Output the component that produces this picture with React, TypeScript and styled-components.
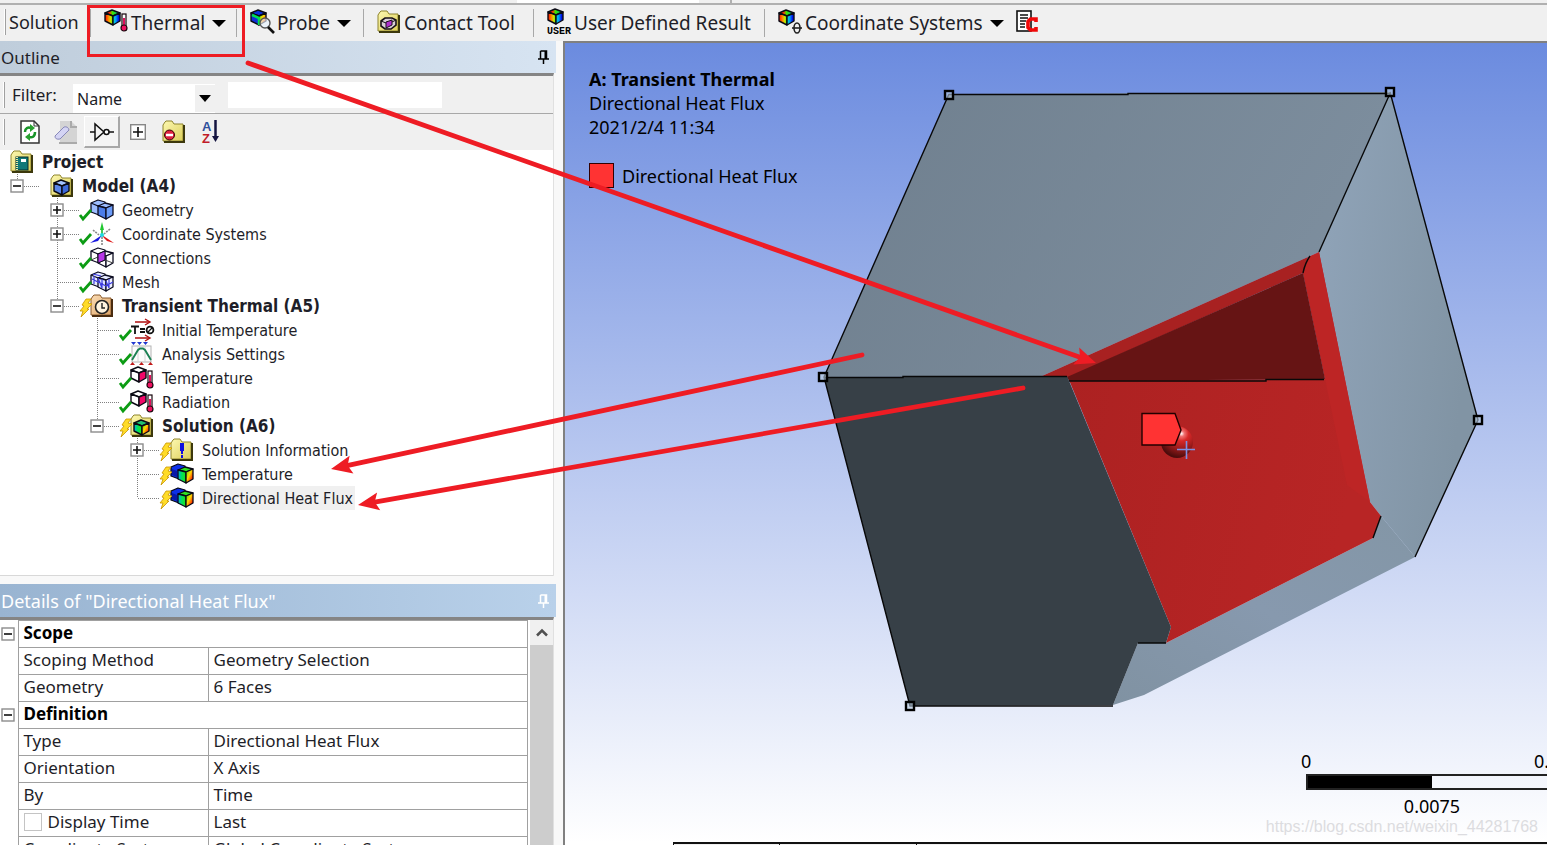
import React from 'react';
import styled, { createGlobalStyle, css } from 'styled-components';

const UI = '"Noto Sans", "Open Sans", sans-serif';
const TREE = '"DejaVu Sans Condensed", "DejaVu Sans", sans-serif';

const GlobalStyle = createGlobalStyle`
  * { box-sizing: border-box; }
  body { margin: 0; background: #f0f0f0; font-family: ${UI}; color: #1e1e28; overflow: hidden; }
  button, input, select { font: inherit; color: inherit; margin: 0; }
  svg { display: block; flex: none; }
`;

/* ---------- page frame ---------- */

const Page = styled.div`
  position: relative;
  display: flex;
  flex-direction: column;
  height: 100vh;
`;

const UpperStrip = styled.div`
  display: flex;
  flex: none;
  height: 5px;
  border-bottom: 2px solid #b0b0b0;
`;

const UpperSegment = styled.div<{ $w?: number; $field?: boolean; $edge?: boolean }>`
  flex: ${p => (p.$w ? `0 0 ${p.$w}px` : '1')};
  background: ${p => (p.$field ? '#fff' : '#f0f0f0')};
  border-right: ${p => (p.$edge ? '2px solid #b0b0b0' : '0')};
`;

const Toolbar = styled.header`
  display: flex;
  flex: none;
  height: 36px;
  padding-left: 1px;
  background: #f0f0f0;
`;

const ToolbarTitle = styled.div`
  width: 90px;
  padding-left: 3px;
  margin: 4px 0;
  border-right: 1px solid #a8a8a8;
  font-size: 18px;
  line-height: 27px;
  display: flex;
  gap: 3px;
`;

const ToolButton = styled.button<{ $w: number; $last?: boolean }>`
  display: flex;
  align-items: center;
  flex: 0 0 ${p => p.$w}px;
  gap: 3px;
  margin: 4px 0;
  padding: 0 0 0 13px;
  border: 0;
  border-right: ${p => (p.$last ? '0' : '1px solid #a8a8a8')};
  background: none;
  font-size: 19px;
  line-height: 28px;
  white-space: nowrap;
`;

const Caret = styled.svg`
  margin-left: 4px;
`;

const Body = styled.div`
  display: flex;
  flex: 1;
  min-height: 0;
`;

const Side = styled.aside`
  display: flex;
  flex-direction: column;
  flex: 0 0 563px;
  padding-right: 7px;
  background: #f8f8f8;
`;

const Outline = styled.section`
  display: flex;
  flex: 1;
  flex-direction: column;
  min-height: 0;
  margin-bottom: 8px;
`;

const Details = styled.section`
  display: flex;
  flex: 0 0 261px;
  flex-direction: column;
  min-height: 0;
`;

const PanelTitle = styled.h2<{ $active?: boolean }>`
  display: flex;
  flex: none;
  align-items: center;
  justify-content: space-between;
  height: ${p => (p.$active ? 33 : 32)}px;
  margin: 0;
  padding: 0 7px 0 1px;
  font-size: ${p => (p.$active ? 18 : 17)}px;
  font-weight: 400;
  color: ${p => (p.$active ? '#fff' : '#1e1e28')};
  background: ${p =>
    p.$active
      ? 'linear-gradient(90deg, #99b4d1, #b9d1ea)'
      : 'linear-gradient(90deg, #bfcddb, #d7e4f2)'};
`;

const PanelBody = styled.div`
  display: flex;
  flex: 1;
  flex-direction: column;
  min-height: 0;
  margin-right: 2px;
  border-top: 3px solid #858585;
  border-right: 1px solid #e0e0e0;
  background: #fff;
`;

const Bar = styled.div<{ $h: number; $line?: boolean }>`
  display: flex;
  flex: none;
  align-items: center;
  height: ${p => p.$h}px;
  padding-left: 3px;
  background: #f0f0f0;
  border-bottom: ${p => (p.$line ? '1px solid #a8a8a8' : '0')};
`;

const Grip = styled.span`
  width: 2px;
  height: 26px;
  border-right: 1px solid #a0a0a0;
  background: #fff;
`;

const FilterLabel = styled.label`
  width: 68px;
  padding-left: 7px;
  font-size: 17px;
  line-height: 24px;
`;

const SelectBox = styled.span`
  display: grid;
  grid-template-columns: 122px 20px;
  align-self: end;
  width: 142px;
  height: 29px;
  margin-right: 13px;
  background: #fff;
  align-items: center;
`;

const FilterSelect = styled.select`
  grid-area: 1 / 1 / 2 / 3;
  height: 29px;
  padding: 0 4px;
  border: 0;
  appearance: none;
  background: transparent;
  font-size: 16px;
`;

const SelectArrow = styled.span`
  grid-area: 1 / 2 / 2 / 3;
  display: flex;
  align-items: center;
  justify-content: center;
  height: 27px;
  background: #f0f0f0;
  pointer-events: none;
`;

const FilterInput = styled.input`
  width: 214px;
  height: 26px;
  border: 0;
  background: #fff;
`;

const IconButton = styled.button<{ $raised?: boolean }>`
  display: flex;
  align-items: center;
  justify-content: center;
  width: 36px;
  height: 32px;
  padding: 0;
  border: 0;
  background: none;
  ${p =>
    p.$raised &&
    css`
      background: #f4f4f4;
      border-right: 2px solid #a8a8a8;
      border-bottom: 2px solid #a8a8a8;
      border-top: 1px solid #fff;
      border-left: 1px solid #fff;
    `}
`;

const IconRow = styled.div`
  display: flex;
  padding-left: 7px;
`;

/* ---------- tree ---------- */

const Tree = styled.ul`
  flex: 1;
  min-height: 0;
  margin: 0;
  padding: 0;
  overflow: hidden;
  list-style: none;
  border-bottom: 1px solid #d8d8d8;
  font-family: ${TREE};
`;

const TreeRow = styled.li<{ $depth: number }>`
  display: flex;
  height: 24px;
  padding-left: ${p => Math.max(0, p.$depth - 1) * 40}px;
`;

const Expander = styled.button`
  padding: 0;
  border: 0;
  background: none;
`;

const TreeLabel = styled.span<{ $bold?: boolean; $selected?: boolean }>`
  height: 24px;
  padding: 0 2px;
  font-size: ${p => (p.$bold ? 17 : 16)}px;
  font-weight: ${p => (p.$bold ? 700 : 400)};
  line-height: 25px;
  white-space: nowrap;
  background: ${p => (p.$selected ? '#f0f0f0' : 'transparent')};
`;

/* ---------- details ---------- */

const DetailsBody = styled.div`
  display: flex;
  flex: 1;
  min-height: 0;
  overflow: hidden;
`;

const DetailsTable = styled.table`
  flex: 1;
  align-self: flex-start;
  margin-right: 2px;
  border-collapse: collapse;
  table-layout: fixed;
  font-size: 17px;
`;

const Gutter = styled.td`
  width: 18px;
  padding: 0 0 0 1px;
`;

const cell = css`
  height: 27px;
  padding: 0 5px 2px;
  border: 1px solid #a0a0a0;
  line-height: 24px;
  text-align: left;
  white-space: nowrap;
`;

const GroupCell = styled.th`
  ${cell}
  font-weight: 700;
  color: #000;
`;

const NameCell = styled.th`
  ${cell}
  width: 190px;
  font-weight: 400;
`;

const ValueCell = styled.td`
  ${cell}
`;

const CheckLabel = styled.label`
  display: flex;
  align-items: center;
  gap: 6px;
`;

const CheckBox = styled.input`
  width: 18px;
  height: 18px;
  border: 1px solid #c4c4c4;
  appearance: none;
  background: #fff;
`;

const Scrollbar = styled.div`
  display: flex;
  flex: 0 0 23px;
  flex-direction: column;
  background: #cdcdcd;
`;

const ScrollUp = styled.button`
  display: flex;
  align-items: center;
  justify-content: center;
  height: 25px;
  padding: 0;
  border: 0;
  background: #f0f0f0;
`;

/* ---------- viewport ---------- */

const Main = styled.main`
  display: flex;
  flex: 1;
  flex-direction: column;
  min-width: 0;
  border-top: 2px solid #808080;
  border-left: 2px solid #808080;
`;

const Viewport = styled.div`
  position: relative;
  flex: 1;
  min-height: 0;
  overflow: hidden;
  background: linear-gradient(180deg, #6b8bdf, #ffffff);
`;

const Scene = styled.svg`
  position: absolute;
  inset: 0;
  width: 100%;
  height: 100%;
`;

const Caption = styled.div`
  position: relative;
  padding: 24px;
  font-size: 18px;
  line-height: 24px;
  color: #000;
  p, h1 { margin: 0; font-size: 18px; }
`;

const Legend = styled.div`
  display: flex;
  align-items: center;
  gap: 8px;
  margin-top: 24px;
  line-height: 24px;
`;

const Swatch = styled.span`
  width: 25px;
  height: 25px;
  border: 1px solid #300;
  background: #ff3333;
`;

const ScaleBar = styled.div`
  position: absolute;
  right: -11px;
  bottom: 24px;
  width: 252px;
  font-size: 18px;
  line-height: 24px;
  color: #000;
`;

const ScaleEnds = styled.div`
  display: flex;
  justify-content: space-between;
  margin: 0 -22px 1px -5px;
`;

const ScaleMiddle = styled.div`
  padding-top: 4px;
  text-align: center;
`;

const ScaleTrack = styled.div`
  display: flex;
  height: 16px;
  border: 2px solid #222;
  &::before { content: ''; width: 50%; background: #000; }
`;

const Watermark = styled.div`
  position: absolute;
  right: 9px;
  bottom: 5px;
  font: 16px/20px "Liberation Sans", Arial, sans-serif;
  color: #dcdce0;
`;

const SheetTabs = styled.div`
  display: flex;
  flex: 0 0 3px;
  padding-left: 108px;
  background: #fff;
`;

const SheetTab = styled.div<{ $w?: number }>`
  flex: ${p => (p.$w ? `0 0 ${p.$w}px` : '1')};
  border-top: 2px solid #111;
  border-left: 1px solid #111;
  background: #f0f0f0;
`;

const Markup = styled.svg`
  position: absolute;
  inset: 0;
  width: 100%;
  height: 100%;
  pointer-events: none;
`;

/* ---------- icon parts ---------- */

const SharedDefs = () => (
  <svg width="0" height="0" style={{ position: 'absolute' }} aria-hidden="true">
    <defs>
      <linearGradient id="warmFace" x1="0" y1="0" x2="1" y2="0">
        <stop offset="0" stopColor="#ff0800" />
        <stop offset=".45" stopColor="#ff9000" />
        <stop offset=".75" stopColor="#c8f000" />
        <stop offset="1" stopColor="#20e000" />
      </linearGradient>
      <linearGradient id="coolFace" x1="0" y1="0" x2="1" y2="0">
        <stop offset="0" stopColor="#00e8c0" />
        <stop offset=".4" stopColor="#00a0ff" />
        <stop offset=".8" stopColor="#0010e8" />
      </linearGradient>
      <linearGradient id="topFace" x1="0" y1="0" x2="1" y2="0">
        <stop offset="0" stopColor="#f01000" />
        <stop offset=".3" stopColor="#ff3000" />
        <stop offset=".5" stopColor="#40e800" />
        <stop offset=".8" stopColor="#00c060" />
        <stop offset="1" stopColor="#0060ff" />
      </linearGradient>
      <linearGradient id="hotSide" x1="0" y1="0" x2="1" y2="1">
        <stop offset=".1" stopColor="#60e000" />
        <stop offset=".45" stopColor="#ffd800" />
        <stop offset=".8" stopColor="#ff2000" />
      </linearGradient>
      <linearGradient id="greenFace" x1="0" y1="0" x2="1" y2="0">
        <stop offset="0" stopColor="#00a8e8" />
        <stop offset=".45" stopColor="#00e060" />
        <stop offset="1" stopColor="#20e810" />
      </linearGradient>
      <linearGradient id="folderFill" x1="0" y1="0" x2="1" y2="1">
        <stop offset="0" stopColor="#fdf8b0" />
        <stop offset="1" stopColor="#dccf5c" />
      </linearGradient>
      <linearGradient id="tanFill" x1="0" y1="0" x2="1" y2="1">
        <stop offset="0" stopColor="#fbdcb4" />
        <stop offset="1" stopColor="#dca468" />
      </linearGradient>
    </defs>
  </svg>
);

type At = { x?: number; y?: number; s?: number };
const place = ({ x = 0, y = 0, s = 1 }: At) => `translate(${x} ${y}) scale(${s})`;

const Folder = ({ tan, ...at }: At & { tan?: boolean }) => (
  <g transform={place(at)}>
    <path d="M1 5 L3 2 L4 1 H10 L12 4 H21 V21 H1Z" fill={tan ? 'url(#tanFill)' : 'url(#folderFill)'} stroke={tan ? '#8a5a2c' : '#8e842c'} />
    <path d="M22 5 V22 H2" fill="none" stroke={tan ? '#4a2c10' : '#3c380c'} strokeWidth="2" />
  </g>
);

const Cube = ({ left = '#5b86e8', right = '#3c68d8', top = '#a4c4ff', ...at }: At & { left?: string; right?: string; top?: string }) => (
  <g transform={place(at)} stroke="#0a0a14" strokeWidth="1.4" strokeLinejoin="round">
    <path d="M1 4 L8 1 L16 4 L9 7Z" fill={top} />
    <path d="M1 4 L9 7 V16 L1 12Z" fill={left} />
    <path d="M9 7 L16 4 V12 L9 16Z" fill={right} />
  </g>
);

const HotCube = (at: At) => <Cube {...at} top="url(#topFace)" left="url(#warmFace)" right="url(#coolFace)" />;

const DoubleCube = ({ a, b, c, mesh, wire, ...at }: At & { a: string; b: string; c: string; mesh?: boolean; wire?: boolean }) => (
  <g transform={place(at)} stroke="#0c0c20" strokeWidth="1.3" strokeLinejoin="round">
    <path d="M1 4 L8 1 L15 3 L15 13 L9 16 L1 13Z" fill={a} />
    <path d="M1 4 L8 7" fill="none" />
    <path d="M8 7 L15 4 L23 6 L16 9Z" fill={a} />
    <path d="M8 7 L16 9 V20 L8 16Z" fill={b} />
    <path d="M16 9 L23 6 V16 L16 20Z" fill={c} />
    {mesh && <path d="M2 8 L8 11 M4 5 L4 13 M3 3 L11 5 M8 11 L16 15 L23 11 M12 8 V17 M19 8 V17 M8 7 L12 17 M16 10 L19 17" stroke="#3c3ce0" strokeWidth="1.2" fill="none" />}
    {wire && <path d="M1 13 L8 10 M8 16 L15 13 L23 16 M15 4 V13" strokeWidth="1" fill="none" stroke="#444" />}
    {wire && <path d="M8 7 L15 4 V13 L8 16Z" fill="#b838e8" strokeWidth="1" />}
  </g>
);

const ResultCube = (at: At) => (
  <g transform={place(at)} stroke="#080814" strokeWidth="1.3" strokeLinejoin="round">
    <path d="M1 4 L8 1 L15 3 L15 13 L9 16 L1 13Z" fill="#0c30e8" />
    <path d="M2 6 L7 8 V14 L2 12Z" fill="#0818a8" stroke="none" />
    <path d="M8 7 L15 4 L23 6 L16 9Z" fill="#30e020" />
    <path d="M8 7 L16 9 V20 L8 16Z" fill="url(#greenFace)" />
    <path d="M16 9 L23 6 V16 L16 20Z" fill="url(#hotSide)" />
  </g>
);

const Thermo = (at: At) => (
  <g transform={place(at)}>
    <rect x="2" y="0" width="4" height="13" fill="#fff" stroke="#18060c" strokeWidth="1.2" />
    <rect x="3" y="4" width="2" height="10" fill="#e0105c" />
    <circle cx="4" cy="14" r="3" fill="#f01060" stroke="#18060c" strokeWidth="1.2" />
  </g>
);

const Check = () => <path d="M0 17 L3 21 L11 12" fill="none" stroke="#0c9c14" strokeWidth="2.8" />;

const Bolt = () => (
  <path d="M6 5 L11 5 L8 9 L12 10 L7 15 L9 15 L1 23 L3 17 L0 17 L4 12 L2 11Z" fill="#ffdc28" stroke="#c89400" strokeWidth=".8" />
);

const icons = {
  thermal: (
    <>
      <HotCube y={-1} />
      <Thermo x={16} y={4} />
    </>
  ),
  probe: (
    <>
      <Cube y={-1} top="#0a30e0" left="#1030d8" right="url(#hotSide)" />
      <path d="M2 5 L9 8 V15" stroke="#00e050" strokeWidth="2.5" fill="none" />
      <circle cx="15" cy="13" r="5" fill="#e8f4ff" fillOpacity=".65" stroke="#555" strokeWidth="1.4" />
      <path d="M18 17 L24 23" stroke="#111" strokeWidth="2.6" />
    </>
  ),
  contact: (
    <>
      <Folder />
      <path d="M4 11 L8 8 H15 L19 10 V15 L14 19 H8 L4 16Z" fill="#d8d0d8" stroke="#181018" strokeWidth="1.6" />
      <path d="M9 12 L15 10 V15 L9 18Z" fill="#b030d0" stroke="#181018" />
      <path d="M4 11 L9 13 M15 12 L19 10" stroke="#181018" />
    </>
  ),
  user: (
    <>
      <HotCube y={-2} />
      <text x="0" y="24" fontFamily="Liberation Mono, monospace" fontSize="10" fontWeight="700" fill="#000">USER</text>
    </>
  ),
  coord: (
    <>
      <HotCube y={-1} />
      <ellipse cx="19" cy="18" rx="3" ry="5" fill="none" stroke="#222" strokeWidth="1.6" />
      <path d="M14 18 H24" stroke="#222" strokeWidth="1.6" />
    </>
  ),
  report: (
    <>
      <rect x="0" y="1" width="14" height="20" fill="#fff" stroke="#111" strokeWidth="1.6" />
      <path d="M3 5 H11 M3 8 H11 M3 11 H9 M3 14 H8 M3 17 H8" stroke="#111" strokeWidth="1.4" />
      <path d="M19 12 V9 H13.500 L11 11.500 V17.500 L13.500 20 H19 V17" fill="none" stroke="#f00808" strokeWidth="3.6" />
    </>
  ),
};

const ToolIcon = ({ name }: { name: keyof typeof icons }) => (
  <svg width="24" height="26" viewBox="0 0 24 26" overflow="visible" aria-hidden="true">{icons[name]}</svg>
);

const DownCaret = () => (
  <Caret width="14" height="9" viewBox="0 0 14 9" aria-hidden="true"><path d="M0 1 H14 L7 8Z" fill="#000" /></Caret>
);

const Pin = ({ color }: { color: string }) => (
  <svg width="11" height="14" viewBox="0 0 11 14" aria-hidden="true">
    <path d="M2.500 1 H8.500 V9 M2.500 1 V9 M0 9 H11 M5.500 9 V14" fill="none" stroke={color} strokeWidth="1.5" />
    <path d="M7.500 1 V9" stroke={color} strokeWidth="2" />
  </svg>
);

const BoxSign = ({ open, cx, cy }: { open: boolean; cx: number; cy: number }) => (
  <g transform={`translate(${cx} ${cy})`}>
    <rect x="-6" y="-6" width="12" height="12" fill="#fff" stroke="#8c8c8c" strokeWidth="1.4" />
    <path d={open ? 'M-4 0 H4' : 'M-4 0 H4 M0 -4 V4'} stroke="#111" strokeWidth="1.6" />
  </g>
);

/* ---------- tree content ---------- */

const treeIcons: Record<string, React.ReactNode> = {
  project: (
    <>
      <Folder />
      <rect x="6" y="7" width="12" height="13" fill="#107878" stroke="#042c2c" />
      <rect x="11" y="9" width="5" height="3" fill="#fff" />
      <path d="M7 7 V20" stroke="#e8e8a0" strokeWidth="2" strokeDasharray="1 1" />
    </>
  ),
  model: (
    <>
      <Folder />
      <Cube x={3} y={5} />
    </>
  ),
  geometry: <DoubleCube y={1} a="#9cbcff" b="#4c7ce8" c="#6c9cf8" />,
  coords: (
    <>
      <path d="M3 8 L9 13 M20 7 L14 12 M12 15 V23" stroke="#888" strokeWidth="1.600" strokeDasharray="2 1" />
      <path d="M12 13 V6" stroke="#18b830" strokeWidth="1.600" />
      <path d="M12 0 L10 8 H14Z" fill="#20c830" />
      <path d="M12 13 L0 21 L8 19 L10 16Z" fill="#1818e0" />
      <path d="M12 13 L24 21 L17 19 L14 16Z" fill="#e01818" />
      <circle cx="12" cy="13" r="2" fill="#20d8e0" />
    </>
  ),
  connections: <DoubleCube y={1} a="#fff" b="#fff" c="#fff" wire />,
  mesh: <DoubleCube y={1} a="#e4e8ff" b="#dce0ff" c="#eef0ff" mesh />,
  transient: (
    <>
      <Folder tan />
      <circle cx="12" cy="13" r="6.500" fill="#fff4e0" stroke="#222" strokeWidth="1.6" />
      <path d="M12 9 V14 H15" fill="none" stroke="#222" strokeWidth="1.4" />
    </>
  ),
  initial: (
    <>
      <path d="M5 4 H19 M5 20 H19" stroke="#b01010" strokeWidth="1.400" />
      <path d="M15 1 L20 4 L15 7 M15 17 L20 20 L15 23" fill="none" stroke="#b01010" strokeWidth="1.400" />
      <path d="M1 8.500 H9 M5 8.500 V16 M10 11 H15 M10 14 H15" stroke="#111" strokeWidth="1.800" />
      <circle cx="20" cy="12" r="3.400" fill="#fff" stroke="#111" strokeWidth="1.800" />
      <path d="M17 15 L23 9" stroke="#111" strokeWidth="1.200" />
    </>
  ),
  analysis: (
    <>
      <rect x="2" y="4" width="19" height="16" fill="#fcfcfc" stroke="#b4b4b4" />
      <path d="M8 4 V20 M15 4 V20" stroke="#d4d4d4" />
      <path d="M2 18 L8 8 L10 6.500 H13 L15 8 L21 18" fill="none" stroke="#1c8054" strokeWidth="1.900" />
      <path d="M1 0 H6 L3.500 3Z M7 0 H12 L9.500 3Z M13 0 H18 L15.500 3Z" fill="#2038d0" />
      <path d="M0 23 H5 L2.500 20Z M9 23 H14 L11.500 20Z M18 23 H23 L20.500 20Z" fill="#c01818" />
    </>
  ),
  load: (
    <>
      <Cube top="#fff" left="#fff" right="#f00868" y={0} />
      <Thermo x={16} y={5} />
    </>
  ),
  solution: (
    <>
      <Folder />
      <Cube x={3} y={5} top="#20c070" left="url(#greenFace)" right="url(#hotSide)" />
    </>
  ),
  info: (
    <>
      <Folder />
      <path d="M12 5 V13" stroke="#1010e0" strokeWidth="4" />
      <path d="M12 13 V20" stroke="#1010e0" strokeWidth="2" strokeDasharray="3 1" />
    </>
  ),
  result: <ResultCube y={1} />,
};

type Node = { label: string; icon: string; depth: number; status?: 'ok' | 'bolt'; open?: boolean; last?: boolean; bold?: boolean; selected?: boolean };

const nodes: Node[] = [
  { label: 'Project', icon: 'project', depth: 0, bold: true },
  { label: 'Model (A4)', icon: 'model', depth: 1, open: true, last: true, bold: true },
  { label: 'Geometry', icon: 'geometry', depth: 2, status: 'ok', open: false },
  { label: 'Coordinate Systems', icon: 'coords', depth: 2, status: 'ok', open: false },
  { label: 'Connections', icon: 'connections', depth: 2, status: 'ok' },
  { label: 'Mesh', icon: 'mesh', depth: 2, status: 'ok' },
  { label: 'Transient Thermal (A5)', icon: 'transient', depth: 2, status: 'bolt', open: true, last: true, bold: true },
  { label: 'Initial Temperature', icon: 'initial', depth: 3, status: 'ok' },
  { label: 'Analysis Settings', icon: 'analysis', depth: 3, status: 'ok' },
  { label: 'Temperature', icon: 'load', depth: 3, status: 'ok' },
  { label: 'Radiation', icon: 'load', depth: 3, status: 'ok' },
  { label: 'Solution (A6)', icon: 'solution', depth: 3, status: 'bolt', open: true, last: true, bold: true },
  { label: 'Solution Information', icon: 'info', depth: 4, status: 'bolt', open: false },
  { label: 'Temperature', icon: 'result', depth: 4, status: 'bolt' },
  { label: 'Directional Heat Flux', icon: 'result', depth: 4, status: 'bolt', last: true, selected: true },
];

const Branch = ({ node }: { node: Node }) => (
  <svg width="40" height="24" viewBox="0 0 40 24" aria-hidden="true">
    <path d={`M17.500 0 V${node.last ? 12 : 24} M18 12.500 H39`} stroke="#808080" strokeDasharray="1 1" fill="none" />
    {node.open !== undefined && <BoxSign open={node.open} cx={17} cy={12} />}
  </svg>
);

const TreeItem = ({ node }: { node: Node }) => (
  <TreeRow $depth={node.depth}>
    {node.depth > 0 &&
      (node.open !== undefined ? (
        <Expander aria-label={`Toggle ${node.label}`}><Branch node={node} /></Expander>
      ) : (
        <Branch node={node} />
      ))}
    <svg width="40" height="24" viewBox="0 0 40 24" overflow="visible" aria-hidden="true">
      <g transform="translate(10 0)">{treeIcons[node.icon]}</g>
      {node.status === 'ok' && <Check />}
      {node.status === 'bolt' && <Bolt />}
    </svg>
    <TreeLabel $bold={node.bold} $selected={node.selected}>{node.label}</TreeLabel>
  </TreeRow>
);

/* ---------- details content ---------- */

type Detail = { group?: string; name?: string; value?: string; check?: boolean };

const details: Detail[] = [
  { group: 'Scope' },
  { name: 'Scoping Method', value: 'Geometry Selection' },
  { name: 'Geometry', value: '6 Faces' },
  { group: 'Definition' },
  { name: 'Type', value: 'Directional Heat Flux' },
  { name: 'Orientation', value: 'X Axis' },
  { name: 'By', value: 'Time' },
  { name: 'Display Time', value: 'Last', check: true },
  { name: 'Coordinate System', value: 'Global Coordinate System' },
];

const DetailRow = ({ row }: { row: Detail }) =>
  row.group ? (
    <tr>
      <Gutter>
        <Expander aria-label={`Toggle ${row.group}`}>
          <svg width="14" height="14" viewBox="0 0 14 14" aria-hidden="true"><BoxSign open cx={7} cy={7} /></svg>
        </Expander>
      </Gutter>
      <GroupCell colSpan={2}>{row.group}</GroupCell>
    </tr>
  ) : (
    <tr>
      <Gutter />
      <NameCell scope="row">
        {row.check ? <CheckLabel><CheckBox type="checkbox" />{row.name}</CheckLabel> : row.name}
      </NameCell>
      <ValueCell>{row.value}</ValueCell>
    </tr>
  );

/* ---------- model and markup ---------- */

const corners = [[949, 95], [1390, 92], [823, 377], [1478, 420], [910, 706]];

const ModelScene = () => (
  <Scene aria-label="Model">
    <defs>
      <linearGradient id="faceTop" x1="0" y1="0" x2="1" y2="0.3">
        <stop offset="0" stopColor="#6f7f8e" />
        <stop offset="1" stopColor="#7d8e9e" />
      </linearGradient>
      <linearGradient id="faceRight" x1="0" y1="0" x2="1" y2="0.3">
        <stop offset="0" stopColor="#90a4b9" />
        <stop offset="1" stopColor="#8194a4" />
      </linearGradient>
      <linearGradient id="faceUnder" x1="0" y1="1" x2="1" y2="0">
        <stop offset="0" stopColor="#8092a2" />
        <stop offset=".5" stopColor="#8799ae" />
        <stop offset="1" stopColor="#8396a6" />
      </linearGradient>
      <linearGradient id="faceRed" x1="0" y1="0" x2="1" y2="0.3">
        <stop offset="0" stopColor="#ab2121" />
        <stop offset="1" stopColor="#b82525" />
      </linearGradient>
      <radialGradient id="ball" cx=".64" cy=".24" r=".75">
        <stop offset="0" stopColor="#ffffff" />
        <stop offset=".12" stopColor="#f07070" />
        <stop offset=".3" stopColor="#d82828" />
        <stop offset=".6" stopColor="#a01c1c" />
        <stop offset="1" stopColor="#4c0c0c" />
      </radialGradient>
    </defs>
    <g transform="translate(-565 -43)">
      <path d="M949 94 L1390 92 L1319 252 L1042 376 L824 377Z" fill="url(#faceTop)" />
      <path d="M1390 92 L1478 420 L1415 557 L1381 516 L1370 502 L1319 252Z" fill="url(#faceRight)" />
      <path d="M1381 516 L1415 557 L1144 695 L1113 705 L1138 643 L1166 643 L1373 538Z" fill="url(#faceUnder)" />
      <path d="M1069 380 L1325 379 L1303 273 L1319 252 L1370 502 L1381 516 L1373 538 L1166 643 L1171 627Z" fill="url(#faceRed)" />
      <path d="M1319 252 L1370 502 L1347 485 L1325 379 L1303 273 L1308 257Z" fill="#bd2525" />
      <path d="M1042 376 L1308 257 L1303 273 L1067 378Z" fill="#a82121" />
      <path d="M1303 273 L1325 379 L1069 381 L1067 377Z" fill="#661414" />
      <path d="M824 377 L1067 376 L1171 627 L1166 643 L1138 643 L1113 705 L910 706Z" fill="#374047" />
      <path
        d="M949 94.500 H1128 V93.500 H1390 L1319 252 M1390 92 L1478 420 L1415 557 M949 94 L824 377 L910 706 H1113 M824 377.500 H903 V376.500 H1067 M1069 381 H1266 V379.500 H1324 M1138 643 H1166 M1381 516 L1373 538 M1310 256 Q1305 263 1303 273"
        fill="none" stroke="#080808" strokeWidth="1.400"
      />
      {corners.map(([x, y]) => (
        <rect key={x} x={x - 4} y={y - 4} width="8" height="8" fill="#b8cce0" fillOpacity=".6" stroke="#000" strokeWidth="2.400" />
      ))}
      <circle cx="1177" cy="442" r="16" fill="url(#ball)" />
      <path d="M1142 413.500 H1175 L1181 430 L1175 445 H1142Z" fill="#ff3333" stroke="#200" strokeWidth="1.400" />
      <path d="M1177 449.500 H1195 M1186.500 441 V459" stroke="#7d90e4" strokeWidth="1.600" />
    </g>
  </Scene>
);

const Arrow = ({ from, to }: { from: [number, number]; to: [number, number] }) => {
  const angle = Math.atan2(to[1] - from[1], to[0] - from[0]);
  const endX = to[0] - 14 * Math.cos(angle);
  const endY = to[1] - 14 * Math.sin(angle);
  return (
    <g>
      <line x1={from[0]} y1={from[1]} x2={endX} y2={endY} stroke="#ee1c24" strokeWidth="4.800" strokeLinecap="round" />
      <path d="M0 0 L-21 -9 L-17 0 L-21 9Z" fill="#ee1c24" transform={`translate(${to[0]} ${to[1]}) rotate(${(angle * 180) / Math.PI})`} />
    </g>
  );
};

export default function App() {
  return (
    <Page>
      <GlobalStyle />
      <SharedDefs />
      <UpperStrip>
        <UpperSegment $w={517} />
        <UpperSegment $w={182} $field />
        <UpperSegment $w={33} $edge />
        <UpperSegment />
      </UpperStrip>
      <Toolbar>
        <ToolbarTitle><Grip />Solution</ToolbarTitle>
        <ToolButton $w={146}><ToolIcon name="thermal" />Thermal<DownCaret /></ToolButton>
        <ToolButton $w={127}><ToolIcon name="probe" />Probe<DownCaret /></ToolButton>
        <ToolButton $w={170}><ToolIcon name="contact" />Contact Tool</ToolButton>
        <ToolButton $w={231}><ToolIcon name="user" />User Defined Result</ToolButton>
        <ToolButton $w={239} $last><ToolIcon name="coord" />Coordinate Systems<DownCaret /></ToolButton>
        <ToolButton $w={40} $last aria-label="Report"><ToolIcon name="report" /></ToolButton>
      </Toolbar>
      <Body>
        <Side>
          <Outline>
            <PanelTitle>Outline<Pin color="#000" /></PanelTitle>
            <PanelBody>
              <Bar $h={38} $line>
                <Grip />
                <FilterLabel htmlFor="filter">Filter:</FilterLabel>
                <SelectBox>
                  <FilterSelect id="filter"><option>Name</option></FilterSelect>
                  <SelectArrow><svg width="12" height="7" viewBox="0 0 12 7" aria-hidden="true"><path d="M0 0 H12 L6 7Z" fill="#000" /></svg></SelectArrow>
                </SelectBox>
                <FilterInput aria-label="Filter text" />
              </Bar>
              <Bar $h={36}>
                <Grip />
                <IconRow>
                  <IconButton aria-label="Refresh">
                    <svg width="20" height="24" viewBox="0 0 20 24"><path d="M1 1 H14 L19 6 V23 H1Z" fill="#fff" stroke="#333" strokeWidth="1.500" /><path d="M14 1 V6 H19" fill="none" stroke="#333" /><path d="M5 12 C5 8 8 7 11 8 M15 12 C15 17 12 18 9 17" fill="none" stroke="#189428" strokeWidth="2.500" /><path d="M10 4 L15 8 L10 12Z M10 13 L5 17 L10 21Z" fill="#28a030" /></svg>
                  </IconButton>
                  <IconButton aria-label="Clear">
                    <svg width="24" height="24" viewBox="0 0 24 24"><path d="M6 1 H17 L23 7 V23 H6Z" fill="#d4d4d4" /><path d="M17 1 V7 H23 M5 23 H23" fill="none" stroke="#aaa" strokeWidth="2" /><path d="M1 16 L10 7 Q14 6 15 10 L6 19 Q1 20 1 16Z" fill="#d4d4f4" stroke="#8888b8" /></svg>
                  </IconButton>
                  <IconButton $raised aria-label="Show connections">
                    <svg width="24" height="20" viewBox="0 0 24 20"><path d="M0 10 H5 M5 2 V18 L14 10Z M19 10 H24" fill="none" stroke="#111" strokeWidth="1.500" /><circle cx="16.500" cy="10" r="2.500" fill="#fff" stroke="#111" strokeWidth="1.500" /></svg>
                  </IconButton>
                  <IconButton aria-label="Expand all">
                    <svg width="16" height="16" viewBox="0 0 16 16"><rect x=".7" y=".7" width="14.600" height="14.600" fill="#fff" stroke="#888" strokeWidth="1.400" /><path d="M3 8 H13 M8 3 V13" stroke="#111" strokeWidth="1.600" /></svg>
                  </IconButton>
                  <IconButton aria-label="Hide folders">
                    <svg width="24" height="24" viewBox="0 0 24 24"><Folder /><circle cx="7.500" cy="15" r="5" fill="#e02040" stroke="#300" /><path d="M4 15 H11" stroke="#fff" strokeWidth="2.500" /></svg>
                  </IconButton>
                  <IconButton aria-label="Sort">
                    <svg width="19" height="26" viewBox="0 0 19 26" overflow="visible"><text x="1" y="12" fontFamily="Liberation Sans, sans-serif" fontSize="13" fontWeight="700" fill="#30509c">A</text><text x="1" y="24" fontFamily="Liberation Sans, sans-serif" fontSize="13" fontWeight="700" fill="#c01c28">Z</text><path d="M14.500 1 V20" stroke="#141440" strokeWidth="2.500" /><path d="M11 17 H18 L14.500 23Z" fill="#141440" /></svg>
                  </IconButton>
                </IconRow>
              </Bar>
              <Tree>{nodes.map((node, i) => <TreeItem key={i} node={node} />)}</Tree>
            </PanelBody>
          </Outline>
          <Details>
            <PanelTitle $active>Details of "Directional Heat Flux"<Pin color="#fff" /></PanelTitle>
            <PanelBody>
              <DetailsBody>
                <DetailsTable>
                  <colgroup><col width="18" /><col width="190" /><col /></colgroup>
                  <tbody>{details.map((row, i) => <DetailRow key={i} row={row} />)}</tbody>
                </DetailsTable>
                <Scrollbar>
                  <ScrollUp aria-label="Scroll up"><svg width="12" height="9" viewBox="0 0 12 9"><path d="M1 7.500 L6 2.500 L11 7.500" fill="none" stroke="#505050" strokeWidth="2.500" /></svg></ScrollUp>
                </Scrollbar>
              </DetailsBody>
            </PanelBody>
          </Details>
        </Side>
        <Main>
          <Viewport>
            <ModelScene />
            <Caption>
              <h1>A: Transient Thermal</h1>
              <p>Directional Heat Flux</p>
              <p>2021/2/4 11:34</p>
              <Legend><Swatch />Directional Heat Flux</Legend>
            </Caption>
            <ScaleBar>
              <ScaleEnds><span>0</span><span>0.015</span></ScaleEnds>
              <ScaleTrack />
              <ScaleMiddle>0.0075</ScaleMiddle>
            </ScaleBar>
            <Watermark>https://blog.csdn.net/weixin_44281768</Watermark>
          </Viewport>
          <SheetTabs><SheetTab $w={106} /><SheetTab $w={137} /><SheetTab /></SheetTabs>
        </Main>
      </Body>
      <Markup aria-hidden="true">
        <rect x="88.500" y="6.500" width="155" height="49" fill="none" stroke="#ee1c24" strokeWidth="3" />
        <Arrow from={[248, 63]} to={[1096, 363]} />
        <Arrow from={[862, 355]} to={[331, 469]} />
        <Arrow from={[1023, 388]} to={[358, 505]} />
      </Markup>
    </Page>
  );
}
